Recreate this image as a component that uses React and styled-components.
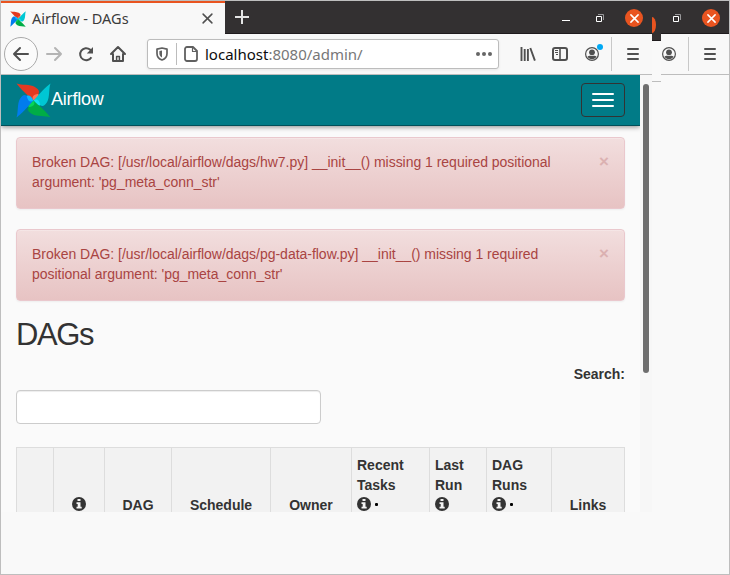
import React from "react";
import styled, { createGlobalStyle } from "styled-components";

const GlobalStyle = createGlobalStyle`
  * { box-sizing: border-box; }
  html, body { margin: 0; padding: 0; overflow: hidden; }
  svg { display: block; flex: none; overflow: visible; }
`;

const uiFont = `"Noto Sans", "Open Sans", sans-serif`;
const pageFont = `"Liberation Sans", Arial, sans-serif`;

const Frame = styled.div`
  width: 730px;
  height: 575px;
  border: 1px solid #bebebe;
  background: #f9f9f9;
  display: flex;
  align-items: flex-start;
`;

const BrowserWindow = styled.div`
  width: 651px;
  flex: none;
`;

const TitleBar = styled.div`
  height: 33px;
  background: #333031;
  border-bottom: 1px solid #1f1b1d;
  display: flex;
  align-items: stretch;
`;

const Tab = styled.div`
  width: 224px;
  height: 33px;
  border-top: 2px solid #e95420;
  background: #f8f8f8;
  display: flex;
  align-items: center;
  padding: 0 12px 0 9px;
`;

const TabTitle = styled.span`
  flex: 1;
  margin: -2px 0 0 6px;
  font: 14.5px/20px ${uiFont};
  letter-spacing: 0;
  color: #3c3c3c;
  white-space: nowrap;
`;

const NewTab = styled.div`
  width: 34px;
  display: flex;
  align-items: center;
  justify-content: center;
`;

const WindowControls = styled.div`
  margin-left: auto;
  display: flex;
  align-items: center;
  padding: 2px ${(p) => p.$end}px 0 0;
`;

const Minimize = styled.div`
  width: 8px;
  height: 1px;
  background: #fff;
  margin: 5px 26px 0 0;
`;

const RestoreSlot = styled.div`
  margin-right: ${(p) => p.$gap}px;
`;

const CloseButton = styled.div`
  width: 18px;
  height: 18px;
  border-radius: 50%;
  background: #e95420;
  display: flex;
  align-items: center;
  justify-content: center;
`;

const Toolbar = styled.div`
  height: 41px;
  background: #f8f8f8;
  border-bottom: 1px solid #bdbdbd;
  display: flex;
  align-items: center;
`;

const BackButton = styled.div`
  width: 34px;
  height: 34px;
  margin-left: 3px;
  border: 1px solid #aaa;
  border-radius: 50%;
  background: #fbfbfb;
  display: flex;
  align-items: center;
  justify-content: center;
`;

const IconSlot = styled.div`
  width: 32px;
  display: flex;
  justify-content: center;
`;

const UrlBar = styled.div`
  width: 352px;
  height: 30px;
  margin-left: 13px;
  border: 1px solid #bcbcbc;
  border-radius: 3px;
  background: #fff;
  box-shadow: 0 1px 3px rgba(0, 0, 0, 0.08);
  display: flex;
  align-items: center;
  padding: 0 6px 0 8px;
`;

const UrlDivider = styled.div`
  width: 1px;
  height: 22px;
  margin: 0 7px 0 8px;
  background: #bcbcbc;
`;

const Url = styled.span`
  flex: 1;
  margin-left: 7px;
  font: 15px/22px ${uiFont};
  letter-spacing: 0;
  color: #777;
  white-space: nowrap;
`;

const Host = styled.span`
  color: #0c0c0d;
`;

const Tools = styled.div`
  display: flex;
  margin-left: 13px;
`;

const AccountSlot = styled(IconSlot)`
  position: relative;
`;

const Badge = styled.div`
  position: absolute;
  top: -3px;
  right: 5px;
  width: 6px;
  height: 6px;
  border-radius: 50%;
  background: #00a9f4;
`;

const ToolDivider = styled.div`
  width: 1px;
  height: 34px;
  margin-left: ${(p) => p.$gap || 0}px;
  background: #c8c8c8;
`;

const MenuSlot = styled.div`
  margin-left: auto;
  padding-right: ${(p) => p.$end}px;
`;

const Viewport = styled.div`
  height: 437px;
  overflow: hidden;
  display: flex;
  font: 14px/20px ${pageFont};
  color: #333;
`;

const Page = styled.div`
  width: 639px;
  flex: none;
  background: #fafafa;
`;

const ScrollTrack = styled.div`
  width: 12px;
  background: #f7f7f7;
  padding: 9px 3px 0;
`;

const ScrollThumb = styled.div`
  height: 289px;
  border-radius: 3px;
  background: #6e6e6e;
`;

const Navbar = styled.div`
  height: 51px;
  background: #017b87;
  border-bottom: 1px solid #01505a;
  box-shadow: 0 1px 5px rgba(0, 0, 0, 0.45);
  clip-path: inset(0 0 -12px 0);
  display: flex;
  align-items: center;
  justify-content: space-between;
  padding: 0 15px;
`;

const Brand = styled.div`
  display: flex;
  align-items: center;
  color: #fff;
  font-size: 18px;
  letter-spacing: -0.2px;
`;

const BrandName = styled.span`
  margin: -3px 0 0 0;
`;

const NavToggle = styled.div`
  width: 44px;
  height: 34px;
  border: 1px solid #333;
  border-radius: 4px;
  display: flex;
  flex-direction: column;
  align-items: center;
  justify-content: center;
  gap: 4px;
`;

const ToggleBar = styled.div`
  width: 22px;
  height: 2px;
  border-radius: 1px;
  background: #fff;
`;

const Content = styled.div`
  padding: 11px 15px 0;
`;

const Alert = styled.div`
  height: 72px;
  margin-bottom: 20px;
  padding: 14px 15px 15px;
  border: 1px solid #eac8cd;
  border-radius: 4px;
  background: linear-gradient(#f2dede, #e7c3c3);
  box-shadow: inset 0 1px 0 rgba(255, 255, 255, 0.25), 0 1px 2px rgba(0, 0, 0, 0.05);
  color: #a94442;
  display: flex;
  justify-content: space-between;
`;

const Message = styled.div`
  white-space: nowrap;
  letter-spacing: -0.022px;
`;

const Dismiss = styled.span`
  margin-top: 1px;
  font: bold 17px/18px ${pageFont};
  color: #dbb1b1;
`;

const Heading = styled.h2`
  margin: -3px 0 0;
  font: 31px/33px ${pageFont};
  height: 47px;
  letter-spacing: -1.4px;
`;

const SearchLabel = styled.div`
  margin-top: -1px;
  height: 26px;
  text-align: right;
  font-weight: bold;
`;

const SearchInput = styled.input`
  display: block;
  width: 305px;
  height: 34px;
  border: 1px solid #ccc;
  border-radius: 4px;
  background: #fff;
  box-shadow: inset 0 1px 1px rgba(0, 0, 0, 0.075);
  outline: none;
`;

const TableHeader = styled.div`
  display: grid;
  grid-template-columns: 37px 51px 67px 99px 81px 78px 57px 65px 73px;
  height: 76px;
  margin-top: 23px;
  border-top: 1px solid #ddd;
  border-left: 1px solid #ddd;
  background: #f2f2f2;
`;

const HeaderCell = styled.div`
  display: flex;
  flex-direction: column;
  justify-content: flex-end;
  align-items: ${(p) => (p.$left ? "flex-start" : "center")};
  padding: 0 5px 8px;
  border-right: 1px solid #ddd;
  font-weight: bold;
`;

const InfoLine = styled.div`
  height: 20px;
  padding-bottom: 2px;
  display: flex;
  align-items: center;
  gap: 4px;
`;

const Dot = styled.div`
  width: 3px;
  height: 3px;
  border-radius: 1px;
  background: #000;
`;

const Seam = styled.div`
  width: 9px;
  flex: none;
`;

const SeamDark = styled.div`
  height: 40px;
  background: #333031;
  padding-top: 16px;
  border-bottom: 1px solid #1f1b1d;
`;

const SeamClose = styled.div`
  width: 4px;
  height: 16px;
  border-radius: 0 4px 4px 0 / 0 8px 8px 0;
  background: #e95420;
`;

const SeamLight = styled.div`
  height: 41px;
  background: #f9f9f9;
  border-bottom: 1px solid #bdbdbd;
`;

const WindowEdge = styled.div`
  width: 68px;
  flex: none;
`;

const EdgeTools = styled.div`
  display: flex;
  align-items: center;
  width: 27px;
  margin-left: 1px;
  justify-content: space-between;
`;

function Pinwheel({ size }) {
  return (
    <svg width={size} height={size} viewBox="0 0 36 36">
      <path d="M18 18C12 12 9 11 .5.500c5 2 14 .5 19 3.500 4 2.500 5 4.500 3.500 7Z" fill="#e43921" />
      <path d="M18 18c-2-3-1-6 5-7 1 3-1 5-5 7Z" fill="#ff7557" />
      <path d="M18 18c6-6 7-9 17.500-17.500-2 5-.5 14-3.500 19-2.500 4-4.500 5-7 3.500Z" fill="#00c7d4" />
      <path d="M18 18c3-2 6-1 7 5-3 1-5-1-7-5Z" fill="#11e1ee" />
      <path d="M18 18c6 6 9 7 17.500 17.500-5-2-14-.5-19-3.500-4-2.500-5-4.500-3.500-7Z" fill="#00ad46" />
      <path d="M18 18c2 3 1 6-5 7-1-3 1-5 5-7Z" fill="#04d659" />
      <path d="M18 18c-6 6-7 9-17.500 17.500 2-5 .5-14 3.500-19 2.500-4 4.500-5 7-3.500Z" fill="#017cee" />
      <path d="M18 18c-3 2-6 1-7-5 3-1 5 1 7 5Z" fill="#0cb6ff" />
    </svg>
  );
}

function Cross({ size, color, width }) {
  return (
    <svg width={size} height={size} viewBox="0 0 10 10" fill="none" stroke={color} strokeWidth={width} strokeLinecap="round">
      <path d="m1 1 8 8M9 1 1 9" />
    </svg>
  );
}

function Arrow({ color, flip }) {
  return (
    <svg width="16" height="14" viewBox="0 0 16 14" fill="none" stroke={color} strokeWidth="2" strokeLinecap="round" strokeLinejoin="round">
      <path d={flip ? "M1 7h14M9 1l6 6-6 6" : "M15 7H1M7 1 1 7l6 6"} />
    </svg>
  );
}

function Restore() {
  return (
    <svg width="8" height="8" viewBox="0 0 8 8" fill="none">
      <path d="M2 .5h5.500V6" stroke="#99989a" />
      <path d="M.5 2.500h5v5h-5z" stroke="#fff" />
    </svg>
  );
}

function Reload() {
  return (
    <svg width="16" height="16" viewBox="0 0 16 16">
      <path d="M13.4 11.2A6 6 0 1 1 12 3.6L14 5.6" fill="none" stroke="#505050" strokeWidth="2" />
      <path d="M15 1v6.5H8.8Z" fill="#505050" />
    </svg>
  );
}

function Home() {
  return (
    <svg width="16" height="16" viewBox="0 0 16 16" fill="none" stroke="#505050" strokeWidth="2" strokeLinecap="round" strokeLinejoin="round">
      <path d="m1 8 7-7 7 7M3 8v7h10V8" />
      <path d="M6.6 15v-4.5h2.8V15" strokeWidth="1.5" />
    </svg>
  );
}

function Shield() {
  return (
    <svg width="12" height="14" viewBox="0 0 12 14">
      <path d="M6 1 11 2.2v4.3C11 10 9 12 6 13 3 12 1 10 1 6.5V2.2Z" fill="none" stroke="#606060" strokeWidth="1.7" strokeLinejoin="round" />
      <path d="M6 3.5v7C4.2 9.6 3.4 8.4 3.4 6.5V4Z" fill="#606060" />
    </svg>
  );
}

function Document() {
  return (
    <svg width="14" height="16" viewBox="0 0 14 16" fill="none" stroke="#606060" strokeLinejoin="round">
      <path d="M3 1h6l4 4v8a2 2 0 0 1-2 2H3a2 2 0 0 1-2-2V3a2 2 0 0 1 2-2Z" strokeWidth="1.8" />
      <path d="M8.5 1v4.5H13" strokeWidth="1.2" />
    </svg>
  );
}

function Ellipsis() {
  return (
    <svg width="16" height="4" viewBox="0 0 16 4" fill="#666">
      <circle cx="2" cy="2" r="2" />
      <circle cx="8" cy="2" r="2" />
      <circle cx="14" cy="2" r="2" />
    </svg>
  );
}

function Library() {
  return (
    <svg width="16" height="14" viewBox="0 0 16 14" fill="none" stroke="#505050" strokeWidth="1.9">
      <path d="M1.500 0v14M4.700 2v12M7.900 2v12M10.300 1l4.600 12.600" />
    </svg>
  );
}

function Sidebar() {
  return (
    <svg width="16" height="14" viewBox="0 0 16 14" fill="none" stroke="#505050">
      <rect x="1" y="1" width="14" height="12" rx="2" strokeWidth="2" />
      <path d="M8 1v12" strokeWidth="1.6" />
      <path d="M3 3.500h3M3 5.500h3M4 7.500h2" strokeWidth="1" />
    </svg>
  );
}

function Account() {
  return (
    <svg width="14" height="14" viewBox="0 0 14 14">
      <circle cx="7" cy="7" r="6.4" fill="none" stroke="#505050" strokeWidth="1.2" />
      <circle cx="7" cy="5.3" r="2.9" fill="#505050" />
      <path d="M2.5 9.6C4 8.4 5 9 7 9s3-.6 4.5.6C10.6 11.3 9 12.3 7 12.3s-3.600-1-4.500-2.700Z" fill="#505050" />
    </svg>
  );
}

function Hamburger() {
  return (
    <svg width="12" height="12" viewBox="0 0 12 12" stroke="#505050" strokeWidth="2" strokeLinecap="round">
      <path d="M1 1h10M1 6h10M1 11h10" />
    </svg>
  );
}

function Info() {
  return (
    <svg width="14" height="14" viewBox="0 0 14 14">
      <circle cx="7" cy="7" r="7" fill="#333" />
      <path d="M5.500 2h3v2h-3ZM4.500 5.200h4v4.600h1.200v1.700H4.500V9.800h1.200V7H4.500Z" fill="#f4f4f4" />
    </svg>
  );
}

const columns = [
  { lines: [] },
  { lines: [], info: true },
  { lines: ["DAG"] },
  { lines: ["Schedule"] },
  { lines: ["Owner"] },
  { lines: ["Recent", "Tasks"], info: true, dot: true, left: true },
  { lines: ["Last", "Run"], info: true, left: true },
  { lines: ["DAG", "Runs"], info: true, dot: true, left: true },
  { lines: ["Links"] },
];

const alerts = [
  {
    first: "Broken DAG: [/usr/local/airflow/dags/hw7.py] __init__() missing 1 required positional",
    second: "argument: 'pg_meta_conn_str'",
  },
  {
    first: "Broken DAG: [/usr/local/airflow/dags/pg-data-flow.py] __init__() missing 1 required",
    second: "positional argument: 'pg_meta_conn_str'",
  },
];

function Close() {
  return (
    <CloseButton>
      <Cross size={9} color="#fff" width={1.7} />
    </CloseButton>
  );
}

export default function App() {
  return (
    <Frame>
      <GlobalStyle />
      <BrowserWindow>
        <TitleBar>
          <Tab>
            <Pinwheel size={16} />
            <TabTitle>Airflow - DAGs</TabTitle>
            <Cross size={11} color="#505050" width={1.4} />
          </Tab>
          <NewTab>
            <svg width="14" height="14" viewBox="0 0 14 14" stroke="#e4e4e4" strokeWidth="2">
              <path d="M7 0v14M0 7h14" />
            </svg>
          </NewTab>
          <WindowControls $end={9}>
            <Minimize />
            <RestoreSlot $gap={21}><Restore /></RestoreSlot>
            <Close />
          </WindowControls>
        </TitleBar>
        <Toolbar>
          <BackButton><Arrow color="#505050" /></BackButton>
          <IconSlot><Arrow color="#b4b4b4" flip /></IconSlot>
          <IconSlot><Reload /></IconSlot>
          <IconSlot><Home /></IconSlot>
          <UrlBar>
            <Shield />
            <UrlDivider />
            <Document />
            <Url><Host>localhost</Host>:8080/admin/</Url>
            <Ellipsis />
          </UrlBar>
          <Tools>
            <IconSlot><Library /></IconSlot>
            <IconSlot><Sidebar /></IconSlot>
            <AccountSlot><Account /><Badge /></AccountSlot>
          </Tools>
          <ToolDivider $gap={3} />
          <MenuSlot $end={13}><Hamburger /></MenuSlot>
        </Toolbar>
        <Viewport>
          <Page>
            <Navbar>
              <Brand><Pinwheel size={35} /><BrandName>Airflow</BrandName></Brand>
              <NavToggle><ToggleBar /><ToggleBar /><ToggleBar /></NavToggle>
            </Navbar>
            <Content>
              {alerts.map((a) => (
                <Alert key={a.first}>
                  <div>
                    <Message>{a.first}</Message>
                    <Message>{a.second}</Message>
                  </div>
                  <Dismiss>×</Dismiss>
                </Alert>
              ))}
              <Heading>DAGs</Heading>
              <SearchLabel>Search:</SearchLabel>
              <SearchInput aria-label="Search" />
              <TableHeader>
                {columns.map((c, i) => (
                  <HeaderCell key={i} $left={c.left}>
                    {c.lines.map((l) => <span key={l}>{l}</span>)}
                    {c.info && <InfoLine><Info />{c.dot && <Dot />}</InfoLine>}
                  </HeaderCell>
                ))}
              </TableHeader>
            </Content>
          </Page>
          <ScrollTrack><ScrollThumb /></ScrollTrack>
        </Viewport>
      </BrowserWindow>
      <Seam>
        <SeamDark><SeamClose /></SeamDark>
        <SeamLight />
      </Seam>
      <WindowEdge>
        <TitleBar>
          <WindowControls $end={9}>
            <RestoreSlot $gap={21}><Restore /></RestoreSlot>
            <Close />
          </WindowControls>
        </TitleBar>
        <Toolbar>
          <EdgeTools><Account /><ToolDivider /></EdgeTools>
          <MenuSlot $end={13}><Hamburger /></MenuSlot>
        </Toolbar>
      </WindowEdge>
    </Frame>
  );
}
